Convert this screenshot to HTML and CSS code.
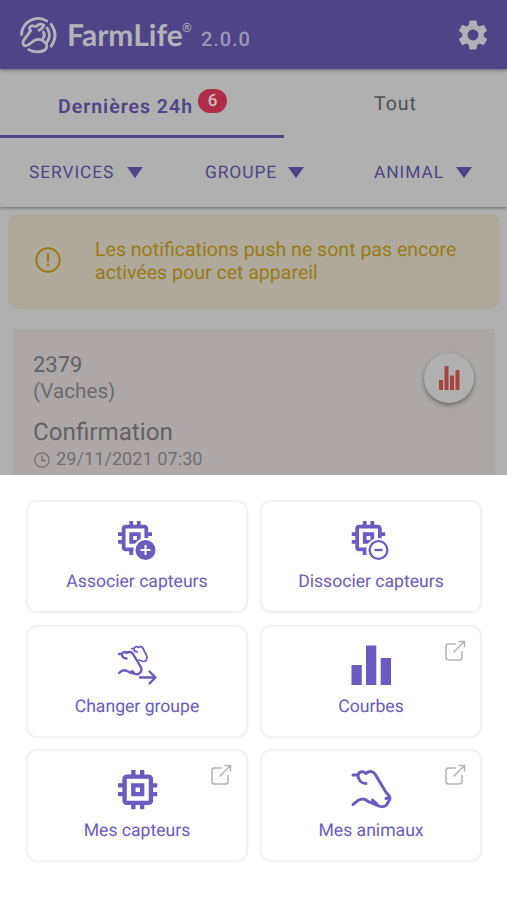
FILE: index.html
```html
<!DOCTYPE html>
<html lang="fr">
<head>
<meta charset="utf-8">
<title>FarmLife</title>
<link rel="stylesheet" href="styles.css">
</head>
<body>
<svg class="defs" aria-hidden="true">
  <symbol id="chip" viewBox="3 3 18 18"><path d="M15 9H9v6h6V9zm-2 4h-2v-2h2v2zm8-2V9h-2V7c0-1.100-.9-2-2-2h-2V3h-2v2h-2V3H9v2H7c-1.100 0-2 .9-2 2v2H3v2h2v2H3v2h2v2c0 1.100.9 2 2 2h2v2h2v-2h2v2h2v-2h2c1.100 0 2-.9 2-2v-2h2v-2h-2v-2h2zm-4 6H7V7h10v10z"/></symbol>
  <symbol id="external" viewBox="0 0 22 22"><path d="M12 4H4.500Q2 4 2 6.500v11Q2 20 4.500 20h11q2.500 0 2.500-2.500V11M9.500 12.500 20.500 1.500M14.500 1.500h6v6" fill="none" stroke="#b4b4b4" stroke-width="1.500"/></symbol>
</svg>
<header class="bar">
  <svg class="logo" viewBox="0 0 38 38" fill="none" stroke="#b4b3b8" stroke-width="2.900" stroke-linecap="round" stroke-linejoin="round">
    <path d="M1.500 18A17.300 17.300 0 0 1 27.500 4M9 33.500Q17 38 25.500 34C28 31.500 28.500 28 26 26.500C23 22.500 18 22 14 24.500C11 27 8 30 5 29.500C2.500 28.500 2.500 26 4 23.500L11 14C9.500 12 9 11.500 10.500 10C12 8 15 10 17 9.500C19 7 22 7 24.500 8.500C23.500 11.500 21.500 12.500 19.500 13.500"/>
    <path d="M24 15.500Q26 18.500 24 21.500M28 11.500Q32.500 18.500 28 25.500M32 7.500Q40 18.500 32 30"/>
  </svg>
  <span class="brand">FarmLife</span><span class="reg">®</span>
  <span class="version">2.0.0</span>
  <svg class="gear" viewBox="0 0 24 24"><path fill="#b0b0b6" d="M19.140 12.940c.040-.3.060-.610.060-.940 0-.320-.020-.640-.070-.940l2.030-1.580c.180-.140.230-.410.120-.610l-1.920-3.320c-.120-.220-.370-.290-.590-.220l-2.390.960c-.5-.380-1.030-.7-1.620-.940l-.360-2.540c-.040-.240-.240-.410-.480-.410h-3.840c-.240 0-.430.170-.470.410l-.360 2.540c-.590.240-1.130.570-1.620.940l-2.390-.960c-.220-.080-.470 0-.590.220L2.740 8.870c-.120.210-.080.470.120.610l2.030 1.580c-.050.3-.090.630-.090.940s.020.640.070.940l-2.030 1.580c-.180.140-.230.410-.120.610l1.920 3.320c.120.220.370.290.590.220l2.390-.960c.5.380 1.030.7 1.620.940l.360 2.540c.050.240.240.410.480.410h3.840c.240 0 .440-.170.470-.410l.360-2.540c.590-.240 1.130-.560 1.620-.940l2.390.960c.220.080.470 0 .590-.220l1.920-3.320c.120-.220.070-.470-.120-.610l-2.010-1.580zM12 15.600c-1.980 0-3.600-1.620-3.600-3.600s1.620-3.600 3.600-3.600 3.600 1.620 3.600 3.600-1.620 3.600-3.600 3.600z"/></svg>
</header>
<section class="nav">
  <nav class="tabs">
    <div class="tab active"><span class="recent">Dernières 24h</span><span class="badge">6</span></div>
    <div class="tab all">Tout</div>
  </nav>
  <div class="filters">
    <div class="filter f1"><span>SERVICES</span><i class="caret"></i></div>
    <div class="filter f2"><span>GROUPE</span><i class="caret"></i></div>
    <div class="filter f3"><span>ANIMAL</span><i class="caret"></i></div>
  </div>
</section>
<main class="feed">
  <div class="notice">
    <svg class="warn" viewBox="0 0 26 26"><circle cx="13" cy="13" r="11.700" fill="none" stroke="#9a7a17" stroke-width="1.900"/><path d="M11.700 6.500h2.600l-.500 8.500h-1.600z" fill="#9a7a17"/><circle cx="13" cy="18" r="1.400" fill="#9a7a17"/></svg>
    <p>Les notifications push ne sont pas encore<br>activées pour cet appareil</p>
  </div>
  <article class="event">
    <div class="details">
      <div class="num">2379</div>
      <div class="group">(Vaches)</div>
      <div class="title">Confirmation</div>
      <div class="date"><svg class="clock" viewBox="0 0 16 16" fill="none" stroke="#717072" stroke-width="1.300"><circle cx="8" cy="8" r="7.200"/><path d="M8 3.500V8.500h4"/></svg><span>29/11/2021 07:30</span></div>
    </div>
    <div class="stats"><svg viewBox="0 0 21 24" fill="#a5453f"><path d="M0 14h4v10H0zM5.500 0h4v24h-4zM11 9.500h4V24h-4zM16.500 4h4v20h-4z"/></svg></div>
  </article>
</main>
<section class="sheet">
  <div class="tile">
    <svg class="icon" viewBox="0 0 42 42"><use href="#chip" x="2" y="2" width="34" height="34"/><circle cx="29.500" cy="31" r="12" fill="#fff"/><circle cx="29.500" cy="31" r="10"/><path d="M29.500 26v10M24.500 31h10" stroke="#fff" stroke-width="2"/></svg>
    <span>Associer capteurs</span>
  </div>
  <div class="tile">
    <svg class="icon" viewBox="0 0 42 42"><use href="#chip" x="1.500" y="2" width="34" height="34"/><circle cx="28.500" cy="31" r="12" fill="#fff"/><circle cx="28.500" cy="31" r="8.900" fill="none" stroke="#6b5bc1" stroke-width="2.300"/><path d="M24.500 31h8" stroke="#6b5bc1" stroke-width="2.300"/></svg>
    <span>Dissocier capteurs</span>
  </div>
  <div class="tile">
    <svg class="icon line" viewBox="0 0 42 42"><path class="thin" d="M15.500 4.500H18C19 2.500 21 2 22.500 3.500C24.500 2 26.500 2.500 27 4.500L31 12.500C31.500 15 30 17.500 27.500 17.500L22.500 16M18 5C18 7 19.500 8 21.500 8"/><path d="M3 10H6C7 7.800 9 7.500 10.500 9C12.500 7.500 15.500 7.500 17 10L24.500 22.500C26.500 25 25.500 28.500 22.500 30C19.500 31 16.500 29 13 28M6 10.500C6 13 8 14.500 10.500 14.500M3 29C5.500 26.500 8.500 25.500 11 27L14 28.500L18 29L16 27"/><path d="M24 33.500h15M33.500 27.500l6 6-6 6" stroke-width="2.400"/></svg>
    <span>Changer groupe</span>
  </div>
  <div class="tile">
    <svg class="open"><use href="#external"/></svg>
    <svg class="icon" viewBox="0 0 42 42"><path d="M1.500 21h10.300v20H1.500zM16 1.500h10.300V41H16zM30.700 14H41v27H30.700z"/></svg>
    <span>Courbes</span>
  </div>
  <div class="tile">
    <svg class="open"><use href="#external"/></svg>
    <svg class="icon" viewBox="0 0 42 42"><use href="#chip" x="2" y="2" width="39.500" height="39.500"/></svg>
    <span>Mes capteurs</span>
  </div>
  <div class="tile">
    <svg class="open"><use href="#external"/></svg>
    <svg class="icon line" viewBox="0 0 42 42"><path class="bold" d="M3 7H8C9 3.500 13 2.500 16 5.500C19 2.500 23 3 25 6L35.500 23.500C37 26 40 28 40 30.500C39.500 33 37.500 34.500 36.500 37C33.500 40 29 38.500 25 36.500L20.500 34.500M8 7.500C8 12 11.500 15.500 16 15.500M3 36.500C6.500 33 11 29.500 15 31.500L19 34L27 36L22.500 32M36 30.500L39 30"/></svg>
    <span>Mes animaux</span>
  </div>
</section>
</body>
</html>
```
FILE: styles.css
```css
* { box-sizing: border-box; }
body { margin: 0; width: 507px; height: 900px; overflow: hidden; display: flex; flex-direction: column; background: #b0b0b0; font-family: Roboto, "Liberation Sans", sans-serif; white-space: nowrap; text-rendering: geometricPrecision; }
svg { display: block; flex: none; overflow: visible; }
.defs { width: 0; height: 0; position: absolute; }
.bar { height: 69px; flex: none; background: #4f4487; display: flex; align-items: center; padding: 2px 19px 0 20px; z-index: 2; box-shadow: 0 1px 4px rgba(0,0,0,.45); color: #b4b3b8; }
.logo { width: 37px; height: 37px; }
.brand { font: 700 30px/34px Lato, sans-serif; margin-left: 10px; margin-top: -2px; width: 115px; }
.reg { font-size: 12.500px; width: 19px; align-self: flex-start; margin-top: 20px; line-height: 13px; }
.version { font-size: 20px; font-weight: 500; letter-spacing: .9px; color: #9d98b7; margin-top: 7px; }
.gear { width: 36px; height: 36px; margin-left: auto; margin-right: -3px; margin-top: -2px; }
.nav { height: 138px; flex: none; background: #b0b0b0; box-shadow: 0 1px 3px rgba(0,0,0,.4); z-index: 1; }
.tabs { display: flex; height: 69px; font-size: 19.500px; letter-spacing: 1px; }
.active { width: 284px; border-bottom: 3px solid #4f4487; display: flex; padding: 20px 0 0 58px; color: #4f4487; font-weight: 600; }
.recent { line-height: 35px; width: 140px; }
.badge { width: 29px; height: 24px; border-radius: 12px; background: #b02c48; color: #c5bfc2; font-size: 17px; line-height: 25px; text-align: center; letter-spacing: 0; font-weight: 500; }
.all { padding: 18px 0 0 90px; line-height: 34px; color: #4c5254; }
.filters { height: 68px; display: flex; align-items: center; color: #4f4487; font-size: 17.400px; letter-spacing: .9px; }
.filter { display: flex; align-items: center; justify-content: space-between; }
.filter span { padding-top: 2px; }
.f1 { width: 114px; margin-left: 29px; }
.f2 { width: 99px; margin-left: 62px; }
.f3 { width: 98px; margin-left: 70px; }
.caret { border: 8.500px solid transparent; border-top: 11px solid #4f4487; border-bottom: 0; }
.feed { padding: 7px 7px 0 8px; height: 268px; overflow: hidden; flex: none; }
.notice { height: 95px; border-radius: 10px; background: #aea99a; display: flex; align-items: center; padding: 0 0 4px 27px; color: #9a7a17; }
.warn { width: 26px; height: 26px; }
.notice p { margin: 0 0 0 34px; padding-top: 3px; font-size: 19.560px; line-height: 23px; }
.event { margin: 20px 5px 0 5px; height: 160px; background: #ada8a7; display: flex; justify-content: space-between; padding: 24px 21px 0 20px; color: #626164; }
.num { font-size: 22px; line-height: 26px; }
.group { font-size: 20.700px; line-height: 26px; color: #6d6b6d; }
.title { font-size: 24.200px; line-height: 30px; margin-top: 12px; }
.date { display: flex; align-items: center; font-size: 18.200px; line-height: 26px; color: #717072; gap: 6px; }
.clock { width: 16px; height: 16px; margin-left: 1px; }
.stats { width: 50px; height: 50px; border-radius: 50%; background: #b0b0b1; box-shadow: 0 2px 4px rgba(0,0,0,.4); display: flex; align-items: center; justify-content: center; }
.stats svg { width: 21px; height: 24px; }
.sheet { flex: 1; background: #fff; z-index: 3; padding: 25px 25px 0 26px; display: grid; grid-template-columns: 222px 222px; gap: 11.700px 12px; grid-auto-rows: 113px; align-content: start; }
.tile { position: relative; border: 2px solid #f3f3f5; border-radius: 11px; box-shadow: 0 0 2px #f4f4f6; display: flex; flex-direction: column; align-items: center; padding-top: 17px; color: #6b5bc1; font-size: 17.600px; line-height: 24px; }
.icon { width: 42px; height: 42px; margin-bottom: 9px; fill: #6b5bc1; }
.line path { fill: none; stroke: #6b5bc1; stroke-width: 2.400; stroke-linecap: round; stroke-linejoin: round; }
.line .thin { stroke-width: 1.700; }
.line .bold { stroke-width: 3; }
.open { width: 22px; height: 22px; position: absolute; top: 13px; right: 14px; }
```
